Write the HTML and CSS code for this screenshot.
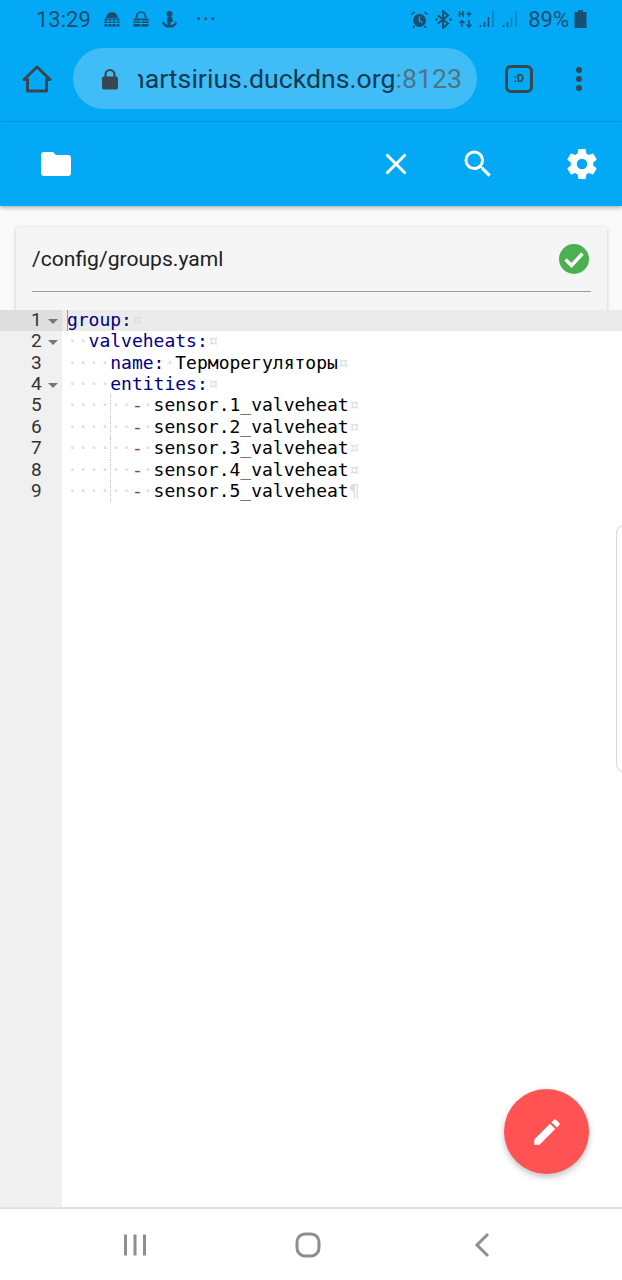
FILE: index.html
```html
<!DOCTYPE html>
<html lang="en">
<head>
<meta charset="utf-8">
<title>groups.yaml</title>
<link rel="stylesheet" href="styles.css">
</head>
<body>
<div class="phone">
  <header class="chrome">
    <div class="status">
      <span class="clock">13:29</span>
      <svg class="st-icon" width="18" height="18" viewBox="0 0 18 18"><path fill="#1b4f72" d="M3 8a6 6 0 0 1 12 0zM1.500 8.500h15v8h-15z"/><path stroke="#03a9f4" stroke-width="1" d="M1.500 11h15M1.500 13.500h15M5 9v7M9 9v7M13 9v7"/></svg>
      <svg class="st-icon" width="18" height="18" viewBox="0 0 18 18"><path fill="none" stroke="#1b4f72" stroke-width="1.700" d="M4.500 8V6.500a4.500 4.500 0 0 1 9 0V8"/><path fill="#1b4f72" d="M1.500 8.500h15v8h-15z"/><path stroke="#03a9f4" stroke-width="1" d="M1.500 11h15M1.500 13.500h15M9 9v7"/></svg>
      <svg class="st-icon" width="17" height="18" viewBox="0 0 17 18"><circle cx="8.500" cy="4" r="3" fill="#1b4f72"/><path fill="#1b4f72" d="M6 7h5l1 5h-2.500v3.500l4-2 1-2.500 1.500 3-4 3.500h-7L1 13.500l1.500-3 1 2.500 3 2z"/></svg>
      <span class="dots">&#8226;&#8226;&#8226;</span>
      <span class="st-fill"></span>
      <svg class="st-icon" width="19" height="19" viewBox="0 0 19 19"><circle cx="9.500" cy="10.500" r="6.500" fill="#1b4f72"/><path stroke="#03a9f4" stroke-width="1.300" fill="none" d="M9.500 6.500v4.500l3 1.500"/><path stroke="#1b4f72" stroke-width="1.600" d="M1.500 4.500l3-2.500M17.500 4.500l-3-2.500M4.500 16l-1.500 2M14.500 16l1.500 2"/></svg>
      <svg class="st-icon" width="17" height="19" viewBox="0 0 17 19"><path fill="none" stroke="#1b4f72" stroke-width="1.900" d="M3 5.500l10 8-5 4.500V1l5 4.500-10 8"/><circle cx="1.500" cy="9.500" r="1.200" fill="#1b4f72"/><circle cx="15.500" cy="9.500" r="1.200" fill="#1b4f72"/></svg>
      <svg class="st-icon" width="15" height="18" viewBox="0 0 15 18"><path stroke="#1b4f72" stroke-width="1.500" fill="none" d="M1.500 1v6M5 1v6M1.500 4H5M8.500 4h5M11 1.500v5M4 17v-6M1.500 13L4 10.500 6.500 13M11 10v7M8.500 14.500L11 17l2.500-2.500"/></svg>
      <svg class="st-icon" width="17" height="18" viewBox="0 0 17 18"><path stroke="#1b4f72" stroke-width="1.600" d="M1.500 17v-2M5.500 17v-5M9.500 17V7"/><path stroke="#1b4f72" stroke-opacity=".45" stroke-width="1.600" d="M14 17V1"/></svg>
      <svg class="st-icon" width="17" height="18" viewBox="0 0 17 18"><path stroke="#1b4f72" stroke-width="1.600" d="M1.500 17v-2M5.500 17v-5"/><path stroke="#1b4f72" stroke-opacity=".45" stroke-width="1.600" d="M9.500 17V7M14 17V1"/></svg>
      <span class="battery-text">89%</span>
      <svg class="st-icon" width="13" height="18" viewBox="0 0 13 18"><path fill="#1b4f72" d="M4 0h5v2h3.500v16H.500V2H4z"/></svg>
    </div>
    <div class="browser">
      <svg class="home" width="32" height="32" viewBox="0 0 32 32"><path fill="none" stroke="#37474f" stroke-width="3" stroke-linejoin="round" d="M3 16.500L16 4l13 12.500h-3.500V28h-19V16.500z"/></svg>
      <div class="pill">
        <svg class="lock" width="18" height="22" viewBox="0 0 18 22"><path fill="none" stroke="#37474f" stroke-width="2.200" d="M4.500 9V6.500a4.500 4.500 0 0 1 9 0V9"/><rect x="1" y="8.500" width="16" height="13" rx="2" fill="#37474f"/></svg>
        <div class="url"><span class="host">smartsirius.duckdns.org</span><span class="port">:8123</span></div>
      </div>
      <div class="tabs"><span class="tabs-label">:D</span></div>
      <svg class="more" width="10" height="26" viewBox="0 0 10 26"><circle cx="5" cy="4" r="3" fill="#37474f"/><circle cx="5" cy="13" r="3" fill="#37474f"/><circle cx="5" cy="22" r="3" fill="#37474f"/></svg>
    </div>
  </header>

  <div class="toolbar">
    <svg class="tb-folder" width="36" height="36" viewBox="0 0 24 24"><path fill="#fff" d="M10 4H4a2 2 0 0 0-2 2v12a2 2 0 0 0 2 2h16a2 2 0 0 0 2-2V8a2 2 0 0 0-2-2h-8z"/></svg>
    <span class="tb-fill"></span>
    <svg class="tb-close" width="36" height="36" viewBox="0 0 24 24"><path fill="#fff" d="M19 6.410L17.590 5 12 10.590 6.410 5 5 6.410 10.590 12 5 17.590 6.410 19 12 13.410 17.590 19 19 17.590 13.410 12z"/></svg>
    <svg class="tb-search" width="36" height="36" viewBox="0 0 24 24"><path fill="#fff" d="M15.500 14h-.79l-.28-.27A6.470 6.470 0 0 0 16 9.500 6.500 6.500 0 1 0 9.500 16c1.610 0 3.090-.59 4.230-1.570l.27.28v.79l5 4.990L20.490 19l-4.990-5zm-6 0C7.010 14 5 11.990 5 9.500S7.010 5 9.500 5 14 7.010 14 9.500 11.990 14 9.500 14z"/></svg>
    <svg class="tb-gear" width="36" height="36" viewBox="0 0 24 24"><path fill="#fff" d="M19.430 12.980c.04-.32.07-.64.07-.98s-.03-.66-.07-.98l2.110-1.650c.19-.15.24-.42.120-.64l-2-3.460c-.12-.22-.39-.3-.61-.22l-2.490 1c-.52-.4-1.080-.73-1.690-.98l-.38-2.650A.488.488 0 0 0 14 2h-4c-.25 0-.46.18-.49.42l-.38 2.650c-.61.25-1.170.59-1.690.98l-2.490-1c-.23-.09-.49 0-.61.22l-2 3.460c-.13.22-.07.49.12.64l2.110 1.650c-.04.32-.07.65-.07.98s.03.66.07.98l-2.110 1.650c-.19.15-.24.42-.12.64l2 3.460c.12.22.39.3.61.22l2.490-1c.52.4 1.080.73 1.690.98l.38 2.650c.03.24.24.42.49.42h4c.25 0 .46-.18.49-.42l.38-2.650c.61-.25 1.170-.59 1.690-.98l2.490 1c.23.09.49 0 .61-.22l2-3.460c.12-.22.07-.49-.12-.64l-2.110-1.650zM12 15.500A3.500 3.500 0 1 1 12 8.500a3.500 3.500 0 0 1 0 7z"/></svg>
  </div>

  <div class="file-area">
    <div class="card">
      <div class="card-row">
        <span class="path">/config/groups.yaml</span>
        <svg class="ok" width="32" height="32" viewBox="0 0 32 32"><circle cx="16" cy="16" r="15" fill="#4caf50"/><path fill="none" stroke="#fff" stroke-width="3.400" d="M7.500 16.500l6 6 11-12"/></svg>
      </div>
      <div class="card-rule"></div>
    </div>
  </div>

  <main class="editor">
    <div class="gutter">
      <div class="num active">1<span class="fold"></span></div>
      <div class="num">2<span class="fold"></span></div>
      <div class="num">3</div>
      <div class="num">4<span class="fold"></span></div>
      <div class="num">5</div>
      <div class="num">6</div>
      <div class="num">7</div>
      <div class="num">8</div>
      <div class="num">9</div>
    </div>
    <div class="code">
      <div class="line active"><span class="cursor"></span><span class="key">group:</span><span class="inv">¤</span></div>
      <div class="line"><span class="inv">··</span><span class="key">valveheats:</span><span class="inv">¤</span></div>
      <div class="line"><span class="inv">····</span><span class="key">name:</span><span class="inv">·</span>Терморегуляторы<span class="inv">¤</span></div>
      <div class="line"><span class="inv">····</span><span class="key">entities:</span><span class="inv">¤</span></div>
      <div class="line"><span class="guide"></span><span class="inv">······</span><span class="dash">-</span><span class="inv">·</span>sensor.1_valveheat<span class="inv">¤</span></div>
      <div class="line"><span class="guide"></span><span class="inv">······</span><span class="dash">-</span><span class="inv">·</span>sensor.2_valveheat<span class="inv">¤</span></div>
      <div class="line"><span class="guide"></span><span class="inv">······</span><span class="dash">-</span><span class="inv">·</span>sensor.3_valveheat<span class="inv">¤</span></div>
      <div class="line"><span class="guide"></span><span class="inv">······</span><span class="dash">-</span><span class="inv">·</span>sensor.4_valveheat<span class="inv">¤</span></div>
      <div class="line"><span class="guide"></span><span class="inv">······</span><span class="dash">-</span><span class="inv">·</span>sensor.5_valveheat<span class="inv">¶</span></div>
    </div>
    <div class="edge-handle"></div>
    <button class="fab" type="button" aria-label="Edit">
      <svg width="34" height="34" viewBox="0 0 24 24"><path fill="#fff" d="M3 17.250V21h3.750L17.810 9.940l-3.750-3.750L3 17.250zM20.710 7.040a1 1 0 0 0 0-1.410l-2.340-2.340a1 1 0 0 0-1.410 0l-1.830 1.830 3.750 3.750 1.830-1.830z"/></svg>
    </button>
  </main>

  <nav class="nav">
    <svg width="26" height="24" viewBox="0 0 26 24"><path stroke="#8e8e8e" stroke-width="3" d="M3.500 1.500v21M13 1.500v21M22.500 1.500v21"/></svg>
    <svg width="26" height="26" viewBox="0 0 26 26"><rect x="2" y="2" width="22" height="22" rx="8" fill="none" stroke="#8e8e8e" stroke-width="3"/></svg>
    <svg width="18" height="26" viewBox="0 0 18 26"><path fill="none" stroke="#8e8e8e" stroke-width="3" d="M15 2L4 13l11 11"/></svg>
  </nav>
</div>
</body>
</html>
```

FILE: styles.css
```css
* { box-sizing: border-box; }
html, body { margin: 0; padding: 0; }
body { background: #fff; font-family: Roboto, "Liberation Sans", sans-serif; }
.phone { width: 622px; height: 1280px; display: flex; flex-direction: column; overflow: hidden; position: relative; }

.chrome { height: 122px; background: #03a9f4; flex: none; border-bottom: 1px solid #0a9ade; }
.status { height: 38px; display: flex; align-items: center; padding: 0 35px 0 36px; color: #1b4f72; }
.clock { font-size: 22px; margin-right: 12px; }
.st-icon { flex: none; margin-right: 11px; }
.dots { font-size: 12px; letter-spacing: 3px; margin-left: 8px; color: #1b4f72; }
.st-fill { flex: 1; }
.status .st-icon:nth-of-type(n+4) { margin-right: 6px; }
.battery-text { font-size: 22px; margin: 0 5px 0 3px; }
.status .st-icon:last-child { margin-right: 0; }

.browser { height: 83px; display: flex; align-items: center; padding: 0 0 0 21px; position: relative; }
.home { flex: none; margin: -2px 20px 0 0; }
.pill { width: 404px; height: 61px; margin-top: -2px; border-radius: 31px; background: #40bdf6; display: flex; align-items: center; padding-left: 28px; overflow: hidden; flex: none; }
.lock { flex: none; margin-right: 19px; }
.url { width: 324px; overflow: hidden; font-size: 26.700px; white-space: nowrap; display: flex; justify-content: flex-end; }
.host { color: #123a52; flex: none; }
.port { color: #4f7385; flex: none; }
.tabs { width: 28px; height: 28px; border: 3px solid #37474f; border-radius: 6px; margin: -2px 0 0 28px; display: flex; align-items: center; justify-content: center; flex: none; }
.tabs-label { font-size: 11px; font-weight: 700; color: #37474f; }
.more { flex: none; margin: -2px 0 0 41px; }

.toolbar { height: 84px; flex: none; background: #03a9f4; display: flex; align-items: center; padding: 0 22px 0 38px; box-shadow: 0 2px 4px rgba(0,0,0,.28); position: relative; z-index: 2; }
.tb-fill { flex: 1; }
.tb-close { margin-right: 46px; }
.tb-search { margin-right: 68px; }

.file-area { height: 104px; flex: none; background: #fafafa; padding: 21px 15px 0 16px; overflow: hidden; }
.card { height: 100px; background: #f5f5f5; box-shadow: 0 1px 4px rgba(0,0,0,.2); padding: 0 16px; }
.card-row { height: 64px; display: flex; align-items: center; justify-content: space-between; }
.path { font-size: 21.100px; color: #212121; margin-top: -2px; }
.ok { margin-right: 1px; }
.card-rule { height: 1px; background: #9e9e9e; }

.editor { flex: 1; display: flex; background: #fff; position: relative; min-height: 0; font-family: "DejaVu Sans Mono", monospace; font-size: 18px; }
.gutter { width: 62px; flex: none; background: #f0f0f0; color: #333; font-family: Roboto, sans-serif; font-size: 19px; }
.num { height: 21.370px; line-height: 20.700px; padding-left: 31px; position: relative; }
.num.active { background: #dedede; }
.fold { position: absolute; left: 48px; top: 9px; width: 0; height: 0; border: 5px solid transparent; border-top: 5px solid #777; border-bottom: 0; }
.code { flex: 1; min-width: 0; color: #000; }
.line { height: 21.370px; line-height: 20.700px; padding-left: 4.900px; position: relative; white-space: pre; }
.line.active { background: #ebebeb; }
.cursor { position: absolute; left: 5px; top: 0; bottom: 0; width: 1px; background: #999; }
.key { color: #00007f; }
.dash { color: #a0268f; }
.inv { color: #dedede; }
.guide { position: absolute; left: 48px; top: 0; bottom: 0; width: 0; border-left: 1px dotted #c4c4c4; }
.edge-handle { position: absolute; right: -2px; top: 215px; width: 8px; height: 247px; border: 1px solid #d8d8d8; border-right: 0; border-radius: 8px 0 0 8px; }
.fab { position: absolute; left: 504px; top: 779px; width: 85px; height: 85px; border-radius: 50%; border: 0; padding: 0; background: #ff5252; display: flex; align-items: center; justify-content: center; box-shadow: 0 3px 6px rgba(0,0,0,.25); }

.nav { height: 73px; flex: none; background: #fff; border-top: 2px solid #e2e2e2; display: flex; align-items: center; padding-left: 122px; }
.nav svg:nth-child(1) { margin-right: 147px; }
.nav svg:nth-child(2) { margin-right: 152px; }
```
